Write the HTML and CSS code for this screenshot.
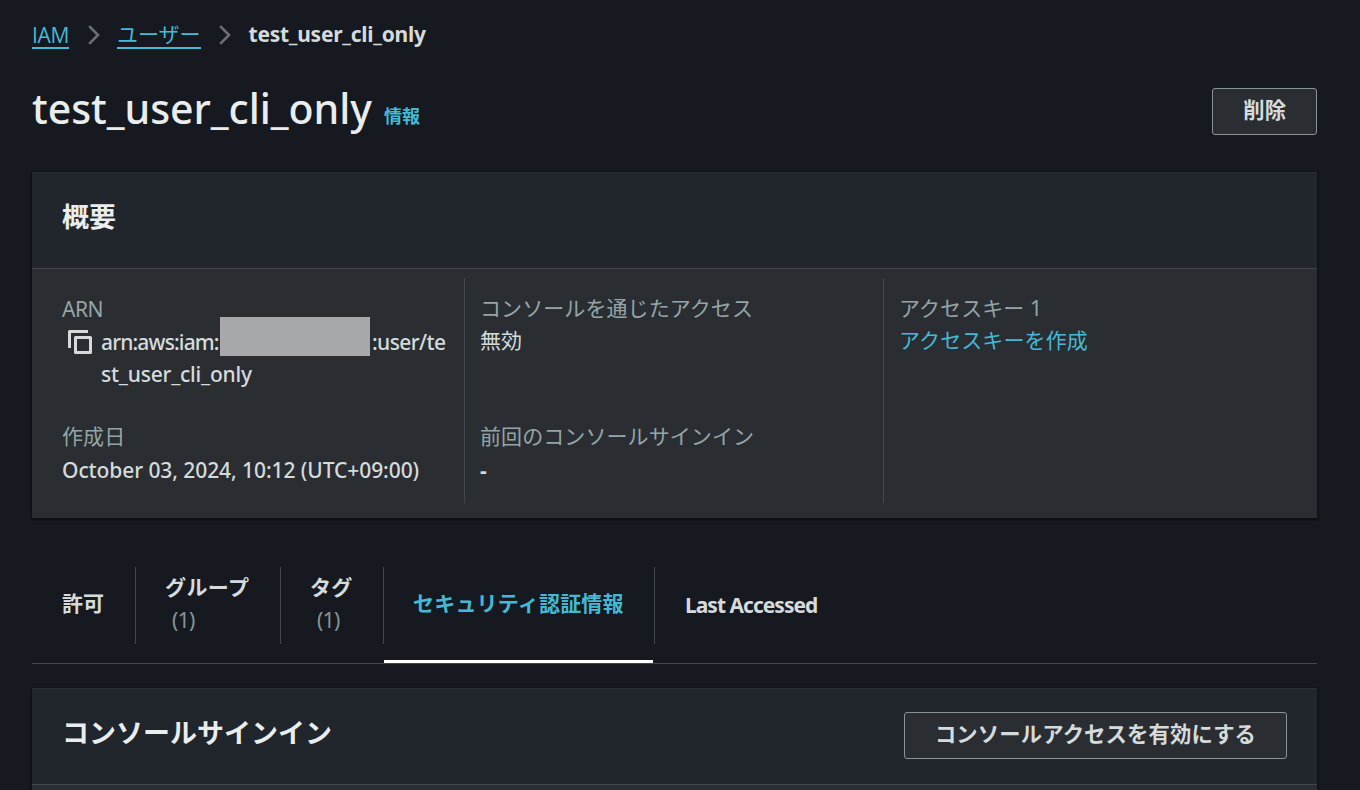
FILE: index.html
```html
<!DOCTYPE html>
<html lang="ja">
<head>
<meta charset="utf-8">
<title>test_user_cli_only | IAM</title>
<link rel="stylesheet" href="styles.css">
</head>
<body>
<main class="page">
  <nav class="breadcrumb">
    <a class="crumb crumb-iam">IAM</a>
    <svg class="chevron" viewBox="0 0 12 20"><path d="M1.2 1.2 10 10 1.2 18.8"/></svg>
    <a class="crumb">ユーザー</a>
    <svg class="chevron" viewBox="0 0 12 20"><path d="M1.2 1.2 10 10 1.2 18.8"/></svg>
    <span class="crumb-current">test_user_cli_only</span>
  </nav>

  <header class="page-header">
    <div class="title-group">
      <h1 class="title">test_user_cli_only</h1>
      <a class="info">情報</a>
    </div>
    <button class="button">削除</button>
  </header>

  <section class="panel summary">
    <div class="panel-header"><h2 class="panel-title">概要</h2></div>
    <div class="summary-grid">
      <div class="column">
        <div class="field">
          <div class="label label-arn">ARN</div>
          <div class="arn">
            <svg class="copy" viewBox="0 0 24 24"><path d="M1.5 18V1.5H20"/><rect x="7.5" y="7.5" width="15" height="15"/></svg>
            <div class="arn-text">
              <div class="arn-line"><span class="arn-prefix">arn:aws:iam:</span><span class="mask"></span><span class="arn-suffix">:user/te</span></div>
              <div class="arn-rest">st_user_cli_only</div>
            </div>
          </div>
        </div>
        <div class="field">
          <div class="label label-ja">作成日</div>
          <div class="value date">October 03, 2024, 10:12 (UTC+09:00)</div>
        </div>
      </div>
      <div class="column">
        <div class="field field-ja">
          <div class="label label-ja">コンソールを通じたアクセス</div>
          <div class="value">無効</div>
        </div>
        <div class="field">
          <div class="label label-ja">前回のコンソールサインイン</div>
          <div class="value dash">-</div>
        </div>
      </div>
      <div class="column">
        <div class="field field-ja">
          <div class="label label-ja">アクセスキー 1</div>
          <div class="value"><a class="link">アクセスキーを作成</a></div>
        </div>
      </div>
    </div>
  </section>

  <div class="tabs">
    <div class="tab tab-permissions"><span class="tab-label">許可</span></div>
    <div class="tab tab-groups"><span class="tab-label">グループ</span><span class="count">(1)</span></div>
    <div class="tab tab-tags"><span class="tab-label">タグ</span><span class="count">(1)</span></div>
    <div class="tab tab-security active"><span class="tab-label">セキュリティ認証情報</span></div>
    <div class="tab tab-last"><span class="tab-label">Last Accessed</span></div>
  </div>

  <section class="panel signin">
    <div class="panel-header">
      <h2 class="panel-title">コンソールサインイン</h2>
      <button class="button button-wide">コンソールアクセスを有効にする</button>
    </div>
    <div class="signin-body"></div>
  </section>
</main>
</body>
</html>
```

FILE: styles.css
```css
* { box-sizing: border-box; }

body {
  margin: 0;
  height: 790px;
  overflow: hidden;
  background: #16191f;
  color: #d5dbdb;
  font: 21px/33px "Noto Sans", "Noto Sans CJK JP", sans-serif;
  white-space: nowrap;
}

.page { padding: 18px 43px 0 32px; }

.breadcrumb { display: flex; height: 33px; }
.crumb { height: 31px; color: #44b9d6; border-bottom: 2px solid #44b9d6; }
.crumb-iam {
  width: 37px;
  padding-top: 1px;
  font-family: "Open Sans", sans-serif;
  letter-spacing: -0.3px;
}
.crumb-current { font-weight: 700; letter-spacing: -0.26px; }
.chevron {
  flex: none;
  width: 12px;
  height: 20px;
  margin: 7px 17.5px 0 18.5px;
  fill: none;
  stroke: #687078;
  stroke-width: 2.6;
}

.page-header {
  display: flex;
  justify-content: space-between;
  height: 84px;
  margin-top: 37px;
}
.title-group { display: flex; }
.title {
  width: 352px;
  margin: -13px 0 0;
  color: #eaeded;
  font-size: 41px;
  font-weight: 500;
  line-height: 66px;
  letter-spacing: -0.04px;
}
.info { margin-top: 12px; color: #44b9d6; font-size: 18px; font-weight: 700; }

.button {
  height: 47px;
  padding: 0 30px 4px;
  border: 1px solid #879596;
  border-radius: 3px;
  background: #2a2e33;
  color: #d5dbdb;
  font: 700 21.33px/40px "Noto Sans", "Noto Sans CJK JP", sans-serif;
}
.button-wide { width: 383px; padding: 0 0 4px; letter-spacing: 0.14px; }

.panel {
  border-top: 1px solid #2a2e33;
  background: #2a2e33;
  box-shadow: 0 1px 2px 1px rgba(0, 0, 0, 0.45);
}
.summary { height: 346px; }
.panel-header {
  display: flex;
  justify-content: space-between;
  height: 96px;
  padding: 23px 30px 0;
  border-bottom: 1px solid #414750;
  background: #21252c;
}
.panel-title {
  margin: 0;
  color: #eaeded;
  font-size: 27px;
  font-weight: 700;
  line-height: 42px;
}

.summary-grid {
  display: grid;
  grid-template-columns: repeat(3, 419px);
  grid-template-rows: 225px;
  height: 249px;
  padding: 9px 15px 15px 13px;
}
.column {
  height: 225px;
  padding: 14px 0 0 15px;
  border-left: 1px solid #414750;
}
.column:first-child { padding-left: 17px; border-left: 0; }
.field { height: 129px; }
.label { color: #95a5a6; }
.label-ja { letter-spacing: 0.08px; }
.field-ja .value { height: 33px; margin-top: -1px; }
.field:not(.field-ja) > .label-ja { height: 34px; margin-top: -1px; }
.label-arn { height: 33px; padding-top: 1px; letter-spacing: -0.5px; }
.arn { display: flex; }
.copy {
  width: 24px;
  height: 24px;
  margin: 5px 9px 0 6px;
  fill: none;
  stroke: #d5dbdb;
  stroke-width: 3;
  stroke-linejoin: round;
}
.arn-text { padding-top: 1px; font-weight: 500; }
.arn-line { display: flex; height: 32px; }
.arn-prefix { width: 119px; letter-spacing: -0.85px; }
.mask { width: 150px; height: 39px; margin: -9px 2px 0 0; background: #a6a8ab; }
.arn-suffix { letter-spacing: -0.6px; }
.arn-rest { letter-spacing: -0.22px; }
.date { font-weight: 500; letter-spacing: -0.08px; }
.dash { font-weight: 700; }
.link { color: #44b9d6; letter-spacing: 0.1px; }

.tabs {
  display: flex;
  height: 97px;
  margin-top: 49px;
  border-bottom: 1px solid #414750;
}
.tab {
  position: relative;
  display: flex;
  flex-direction: column;
  justify-content: center;
  height: 77px;
  padding: 0 0 4px 29px;
  border-right: 1px solid #414750;
  font-weight: 700;
}
.tab-permissions { width: 104px; padding-left: 30px; }
.tab-groups { width: 145px; letter-spacing: 0.4px; }
.tab-tags { width: 103px; letter-spacing: 0.3px; }
.tab-security { width: 271px; letter-spacing: 0.2px; }
.tab-last {
  padding: 0 0 0 30px;
  border-right: 0;
  letter-spacing: -0.98px;
}
.count {
  height: 33px;
  padding-left: 7px;
  color: #879596;
  font-weight: 400;
  letter-spacing: -0.6px;
}
.active { color: #44b9d6; }
.active::after {
  content: "";
  position: absolute;
  left: 0;
  right: 1px;
  bottom: -19px;
  height: 3px;
  background: #fff;
}

.signin { margin-top: 24px; }
.signin-body { height: 5px; }
```
